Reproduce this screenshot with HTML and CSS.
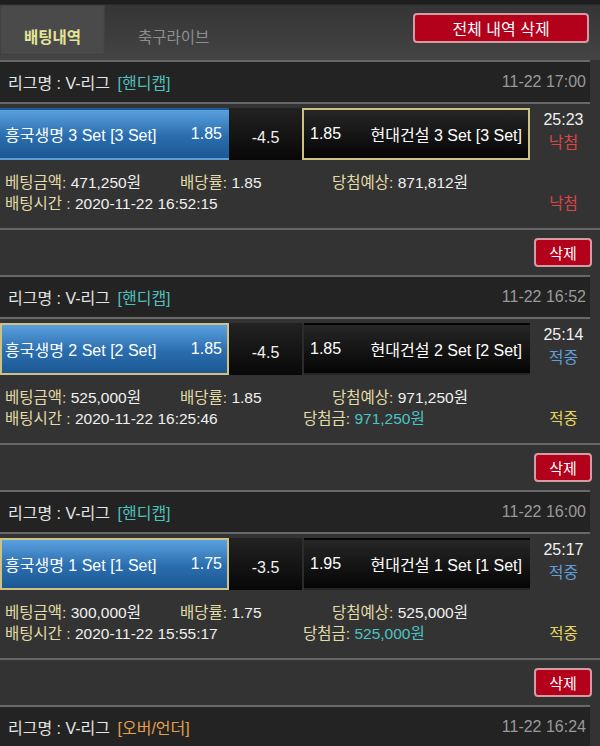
FILE: index.html
```html
<!DOCTYPE html>
<html lang="ko">
<head>
    <meta charset="UTF-8">
    <meta name="viewport" content="width=device-width, initial-scale=1.0">
    <title>배팅내역</title>
    <link rel="stylesheet" href="styles.css">
</head>
<body>
    <div class="topbar">
        <div class="tab active">배팅내역</div>
        <div class="tab">축구라이브</div>
        <button class="btn-red btn-all">전체 내역 삭제</button>
    </div>

    <!-- bet 1 -->
    <div class="bet-item">
        <div class="league">
            <span>리그명 : V-리그 <em class="type handi">[핸디캡]</em></span>
            <span class="date">11-22 17:00</span>
        </div>
        <div class="game">
            <div class="team home"><span>흥국생명 3 Set [3 Set]</span><span>1.85</span></div>
            <div class="handicap">-4.5</div>
            <div class="team away picked"><span>1.85</span><span>현대건설 3 Set [3 Set]</span></div>
            <div class="state"><div>25:23</div><div class="lose">낙첨</div></div>
        </div>
        <div class="info">
            <div class="row row1">
                <span><span class="lbl">베팅금액:</span> 471,250원</span>
                <span><span class="lbl">배당률:</span> 1.85</span>
                <span><span class="lbl">당첨예상:</span> 871,812원</span>
            </div>
            <div class="row row2">
                <span><span class="lbl">배팅시간 :</span> 2020-11-22 16:52:15</span>
                <span></span>
                <span class="res lose">낙첨</span>
            </div>
        </div>
        <div class="actions"><button class="btn-red">삭제</button></div>
    </div>

    <!-- bet 2 -->
    <div class="bet-item">
        <div class="league">
            <span>리그명 : V-리그 <em class="type handi">[핸디캡]</em></span>
            <span class="date">11-22 16:52</span>
        </div>
        <div class="game">
            <div class="team home picked"><span>흥국생명 2 Set [2 Set]</span><span>1.85</span></div>
            <div class="handicap">-4.5</div>
            <div class="team away"><span>1.85</span><span>현대건설 2 Set [2 Set]</span></div>
            <div class="state"><div>25:14</div><div class="win">적중</div></div>
        </div>
        <div class="info">
            <div class="row row1">
                <span><span class="lbl">베팅금액:</span> 525,000원</span>
                <span><span class="lbl">배당률:</span> 1.85</span>
                <span><span class="lbl">당첨예상:</span> 971,250원</span>
            </div>
            <div class="row row2">
                <span><span class="lbl">배팅시간 :</span> 2020-11-22 16:25:46</span>
                <span><span class="lbl">당첨금:</span> <span class="prize">971,250원</span></span>
                <span class="res hit">적중</span>
            </div>
        </div>
        <div class="actions"><button class="btn-red">삭제</button></div>
    </div>

    <!-- bet 3 -->
    <div class="bet-item">
        <div class="league">
            <span>리그명 : V-리그 <em class="type handi">[핸디캡]</em></span>
            <span class="date">11-22 16:00</span>
        </div>
        <div class="game">
            <div class="team home picked"><span>흥국생명 1 Set [1 Set]</span><span>1.75</span></div>
            <div class="handicap">-3.5</div>
            <div class="team away"><span>1.95</span><span>현대건설 1 Set [1 Set]</span></div>
            <div class="state"><div>25:17</div><div class="win">적중</div></div>
        </div>
        <div class="info">
            <div class="row row1">
                <span><span class="lbl">베팅금액:</span> 300,000원</span>
                <span><span class="lbl">배당률:</span> 1.75</span>
                <span><span class="lbl">당첨예상:</span> 525,000원</span>
            </div>
            <div class="row row2">
                <span><span class="lbl">배팅시간 :</span> 2020-11-22 15:55:17</span>
                <span><span class="lbl">당첨금:</span> <span class="prize">525,000원</span></span>
                <span class="res hit">적중</span>
            </div>
        </div>
        <div class="actions"><button class="btn-red">삭제</button></div>
    </div>

    <!-- bet 4 -->
    <div class="bet-item">
        <div class="league">
            <span>리그명 : V-리그 <em class="type ou">[오버/언더]</em></span>
            <span class="date">11-22 16:24</span>
        </div>
    </div>
</body>
</html>
```

FILE: styles.css
```css
body {
    margin: 0;
    width: 600px;
    background-color: #333;
    color: #f0f0f0;
    font-family: "Liberation Sans", "Noto Sans CJK KR", sans-serif;
    font-size: 15px;
}
.topbar {
    height: 60px;
    display: flex;
    align-items: flex-start;
    background: linear-gradient(#1d1d1d 0, #1d1d1d 4px, #353535 5px, #444 100%);
}
.tab {
    margin-top: 5px;
    height: 50px;
    box-sizing: border-box;
    padding-top: 24px;
    line-height: 18px;
    color: #8e8e8e;
    margin-left: 33px;
    font-size: 15.5px;
}
.tab.active {
    width: 105px;
    margin-left: 0;
    text-align: center;
    background-color: #4a4a4a;
    box-shadow: inset 0 0 2px #2a2a2a;
    color: #e4e496;
    font-weight: bold;
}
.btn-red {
    background-color: #b3001b;
    border: 2px solid #d39ba2;
    border-radius: 4px;
    color: #fff;
    font-family: inherit;
    padding: 0;
    cursor: pointer;
}
.btn-all {
    margin: 13px 11px 0 auto;
    width: 176px;
    height: 30px;
    font-size: 16px;
}
.league {
    width: 590px;
    height: 44px;
    box-sizing: border-box;
    border-top: 2px solid #686868;
    border-bottom: 2px solid #686868;
    background-color: #232323;
    display: flex;
    align-items: center;
    justify-content: space-between;
    padding: 0 4px 0 8px;
    color: #e6e6e6;
    font-size: 16px;
}
.league .type {
    font-style: normal;
    margin-left: 3px;
}
.handi {
    color: #4fc1bd;
}
.ou {
    color: #e2a04e;
}
.date {
    color: #9a9a9a;
}
.game {
    display: flex;
    height: 52px;
    margin-top: 4px;
    font-size: 16px;
}
.team {
    box-sizing: border-box;
    display: flex;
    align-items: center;
    justify-content: space-between;
    border: 2px solid transparent;
    color: #fff;
}
.home {
    width: 229px;
    padding: 0 5px 0 3px;
    background: linear-gradient(#5aa0de, #2a6dae 55%, #1c5893);
}
.handicap {
    width: 73px;
    box-sizing: border-box;
    padding-top: 8px;
    display: flex;
    align-items: center;
    justify-content: center;
    background: linear-gradient(#222, #080808);
}
.away {
    width: 228px;
    padding: 0 6px 0 6px;
    background: linear-gradient(#262626, #050505);
    border-left-color: #2c2c2c;
}
.picked {
    border-color: #cdc184;
}
.state {
    width: 67px;
    text-align: center;
    line-height: 23px;
}
.lose {
    color: #dc4448;
}
.win {
    color: #5f9ed8;
}
.info {
    padding: 12px 3px 14px 5px;
    line-height: 21px;
    font-size: 15.5px;
    border-bottom: 2px solid #666;
}
.row {
    display: grid;
}
.row1 {
    grid-template-columns: 175px 152px 1fr;
}
.row2 {
    grid-template-columns: 298px 1fr 67px;
}
.lbl {
    color: #e2dba8;
}
.prize {
    color: #4cc3c3;
}
.res {
    text-align: center;
}
.hit {
    color: #e4d65c;
}
.actions {
    height: 45px;
    box-sizing: border-box;
    padding: 8px 8px 0 0;
    display: flex;
    justify-content: flex-end;
    align-items: flex-start;
}
.actions .btn-red {
    width: 58px;
    height: 29px;
    font-size: 15px;
}
```
